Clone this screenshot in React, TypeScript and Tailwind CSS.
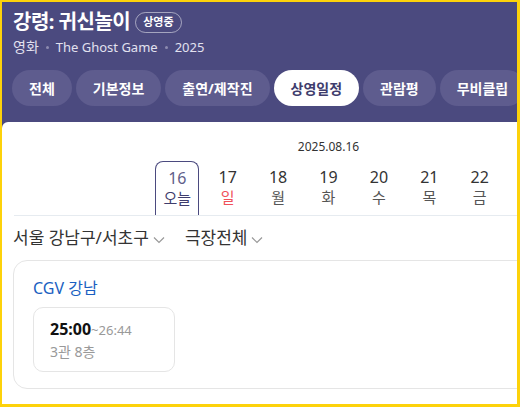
import React from 'react';

const tabs = ['전체', '기본정보', '출연/제작진', '상영일정', '관람평', '무비클립'];

const days = [
  { d: '16', w: '오늘', today: true },
  { d: '17', w: '일', sun: true },
  { d: '18', w: '월' },
  { d: '19', w: '화' },
  { d: '20', w: '수' },
  { d: '21', w: '목' },
  { d: '22', w: '금' },
];

function Chevron() {
  return (
    <svg width="12" height="8" viewBox="0 0 12 8" className="ml-[4px] mt-[3px]">
      <path d="M1 1.5 6 6.5 11 1.5" fill="none" stroke="#999" strokeWidth="1.2" />
    </svg>
  );
}

export default function App() {
  return (
    <div
      className="w-[520px] h-[407px] overflow-hidden border-[#fdd20a] border-t-2 border-l-2 border-r-[3px] border-b-[3px] bg-[#4b4a7f]"
      style={{ fontFamily: '"Noto Sans", "Noto Sans CJK KR", sans-serif' }}
    >
      <div className="w-[653px]">
        {/* header */}
        <div className="px-[11px] pt-[6px] pb-[16px]">
          <div className="flex items-center h-[28px] gap-[5px]">
            <h1 className="text-[20px] font-bold text-white leading-[28px] tracking-[-0.5px]">강령: 귀신놀이</h1>
            <span className="h-[21px] px-[7px] rounded-full border border-white/50 text-white text-[11px] font-bold flex items-center">
              상영중
            </span>
          </div>
          <div className="mt-[1px] flex items-center text-[14px] leading-[20px] text-[#e2e1ef]">
            <span>영화</span>
            <span className="mx-[7px] w-[3px] h-[3px] rounded-full bg-[#8c8bb0]" />
            <span className="text-[13px]">The Ghost Game</span>
            <span className="mx-[7px] w-[3px] h-[3px] rounded-full bg-[#8c8bb0]" />
            <span className="text-[13px]">2025</span>
          </div>
          <div className="mt-[13px] -ml-[1px] flex gap-[4px]">
            {tabs.map((t) => (
              <div
                key={t}
                className={
                  t === '상영일정'
                    ? 'h-[36px] px-[17px] rounded-full bg-white text-[#3f3d6d] text-[14px] font-bold flex items-center shrink-0'
                    : 'h-[36px] px-[17px] rounded-full bg-[#5e5c8e] text-white text-[14px] font-bold flex items-center shrink-0'
                }
              >
                {t}
              </div>
            ))}
          </div>
        </div>

        {/* content */}
        <div className="bg-white rounded-tl-[6px] h-[290px]">
          <div className="pt-[17px] text-center text-[12px] leading-[16px] text-[#333]">2025.08.16</div>
          <div className="mt-[6px] mx-[12px] border-b border-[#e6ebf0] flex justify-center gap-[6.4px]">
            {days.map((x) => (
              <div
                key={x.d}
                className={
                  x.today
                    ? 'w-[44px] h-[54px] rounded-t-[8px] border border-b-0 border-[#4b4a7f] flex flex-col items-center pt-[6px]'
                    : 'w-[44px] h-[54px] flex flex-col items-center pt-[6px]'
                }
              >
                <span className={x.today ? 'text-[16px] leading-[20px] text-[#5f5e8a]' : 'text-[16px] leading-[20px] text-[#333]'}>
                  {x.d}
                </span>
                <span
                  className={
                    x.today
                      ? 'text-[15px] leading-[20px] text-[#3f3d6d]'
                      : x.sun
                      ? 'text-[15px] leading-[20px] text-[#f0505a]'
                      : 'text-[15px] leading-[20px] text-[#555]'
                  }
                >
                  {x.w}
                </span>
              </div>
            ))}
          </div>

          <div className="px-[11px] h-[44px] flex items-center gap-[20px] text-[17px] text-[#333]">
            <div className="flex items-center">
              서울 강남구/서초구
              <Chevron />
            </div>
            <div className="flex items-center">
              극장전체
              <Chevron />
            </div>
          </div>

          <div className="mx-[11px] h-[129px] rounded-[14px] border border-[#e5e5e5] px-[19px] pt-[16px]">
            <div className="text-[16px] leading-[22px] text-[#1b5fc1]">CGV 강남</div>
            <div className="mt-[8px] w-[142px] h-[65px] rounded-[10px] border border-[#e5e5e5] px-[16px] pt-[10px]">
              <div className="flex items-baseline leading-[22px]">
                <span className="text-[16px] font-bold text-[#111]">25:00</span>
                <span className="text-[13px] text-[#999]">~26:44</span>
              </div>
              <div className="text-[14px] leading-[20px] text-[#999] mt-[1px]">3관 8층</div>
            </div>
          </div>
        </div>
      </div>
    </div>
  );
}
